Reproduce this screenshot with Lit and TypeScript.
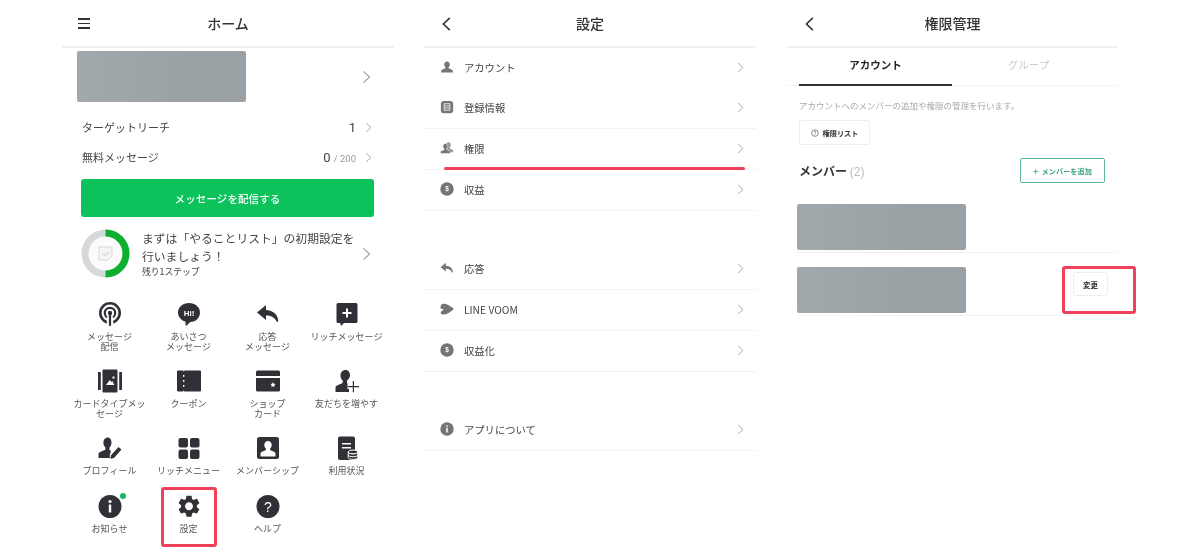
import { LitElement, html, css, svg } from "lit";
import { customElement } from "lit/decorators.js";

const D = "#2f3136";
const GEAR = "M19.14 12.94c.04-.3.06-.61.06-.94 0-.32-.02-.64-.07-.94l2.03-1.58c.18-.14.23-.41.12-.61l-1.92-3.32c-.12-.22-.37-.29-.59-.22l-2.39.96c-.5-.38-1.03-.7-1.62-.94l-.36-2.54c-.04-.24-.24-.41-.48-.41h-3.84c-.24 0-.43.17-.47.41l-.36 2.54c-.59.24-1.13.57-1.62.94l-2.39-.96c-.22-.08-.47 0-.59.22L2.74 8.87c-.12.21-.08.47.12.61l2.03 1.58c-.05.3-.09.63-.09.94s.02.64.07.94l-2.03 1.58c-.18.14-.23.41-.12.61l1.92 3.32c.12.22.37.29.59.22l2.39-.96c.5.38 1.03.7 1.62.94l.36 2.54c.05.24.24.41.48.41h3.84c.24 0 .44-.17.47-.41l.36-2.54c.59-.24 1.13-.56 1.62-.94l2.39.96c.22.08.47 0 .59-.22l1.92-3.32c.12-.22.07-.47-.12-.61l-2.01-1.58zM12 15.6c-1.98 0-3.6-1.62-3.6-3.6s1.62-3.6 3.6-3.6 3.6 1.62 3.6 3.6-1.62 3.6-3.6 3.6z";
const REPLY = "M10 3 1 10.500l9 7.500v-4.600c4.800 0 8.200 1.500 11 6.300.4.600 1.200.4 1.200-.4 0-6.600-5.200-11-12.200-11.200z";
const PERSON = "M12 2.500c-3 0-4.800 2.400-4.800 5.300 0 2 .9 3.800 2.200 4.800v1.700l-6 2.600c-1 .5-1.400 1.200-1.400 2.200v2.400h20v-2.400c0-1-.4-1.700-1.400-2.200l-6-2.600v-1.700c1.300-1 2.200-2.800 2.200-4.800 0-2.900-1.800-5.300-4.800-5.300z";

const icons: Record<string, unknown> = {
  broadcast: svg`<g fill="none" stroke="${D}"><circle cx="12" cy="11" r="9.700" stroke-width="2.600"/><circle cx="12" cy="11" r="5.200" stroke-width="2.200"/></g><rect x="8.800" y="14.500" width="6.400" height="10" fill="#fff"/><circle cx="12" cy="11" r="2.200" fill="${D}"/><rect x="10.900" y="11" width="2.200" height="13" rx="1" fill="${D}"/>`,
  hi: svg`<path fill="${D}" d="M12 1C5.900 1 1 5.200 1 10.500c0 4.200 3 7.700 7.300 9l.4 3.600c0 .6.6.8 1 .4l3.600-3.500C18.800 20 23 15.800 23 10.500 23 5.200 18.100 1 12 1z"/><text x="12" y="13.500" text-anchor="middle" font-size="8" font-weight="700" fill="#fff" font-family="Liberation Sans, sans-serif">Hi!</text>`,
  reply: svg`<path fill="${D}" d="${REPLY}"/>`,
  rich: svg`<path fill="${D}" d="M3 1h18a1.500 1.500 0 0 1 1.500 1.500v17A1.500 1.500 0 0 1 21 21H9l-3 3-.8-3H3a1.500 1.500 0 0 1-1.500-1.500v-17A1.500 1.500 0 0 1 3 1z"/><path fill="#fff" d="M11 6.500h2v3.500h3.500v2H13v3.500h-2V12H7.500v-2H11z"/>`,
  cardtype: svg`<path fill="${D}" d="M5.500 .5h13a1 1 0 0 1 1 1v21a1 1 0 0 1-1 1h-13a1 1 0 0 1-1-1v-21a1 1 0 0 1 1-1zM0 3h2.800v18H0zM21.200 3H24v18h-2.800z"/><path fill="#fff" d="M8 16l3.800-5 1.500 2 1-1 2 4zM14.500 7.500h2v2h-2z"/>`,
  coupon: svg`<path fill="${D}" d="M1 1.500h5l.7 1 .7-1H23a1 1 0 0 1 1 1v19a1 1 0 0 1-1 1H7.400l-.7-1-.7 1H1a1 1 0 0 1-1-1v-19a1 1 0 0 1 1-1z"/><g fill="#fff"><rect x="6" y="6" width="1.400" height="1.800"/><rect x="6" y="11" width="1.400" height="1.800"/><rect x="6" y="16" width="1.400" height="1.800"/></g>`,
  shop: svg`<path fill="${D}" d="M1.500 1.500h21A1.500 1.500 0 0 1 24 3v4H0V3a1.500 1.500 0 0 1 1.500-1.500zM0 9h24v12a1.500 1.500 0 0 1-1.500 1.500h-21A1.500 1.500 0 0 1 0 21z"/><path fill="#fff" d="m17 13 .8 1.700 1.900.3-1.400 1.300.3 1.900-1.600-.9-1.600.9.3-1.900-1.400-1.300 1.900-.3z"/>`,
  friend: svg`<path fill="${D}" d="M10.500 1C7.200 1 5.500 3.500 5.500 6.500c0 2.200.9 4 2.200 5.100v2.300L2 16.500c-1 .5-1.500 1.300-1.500 2.400V23H14v-3h-1.500v-5.500l-.5-.6v-2.300c1.300-1.100 3-2.900 3-5.100C15 3.500 13.800 1 10.500 1z"/><path fill="${D}" d="M18.800 13h1.200v5h5v1.200h-5v5h-1.200v-5h-5V18h5z" transform="translate(-1 -1)"/>`,
  profile: svg`<path fill="${D}" d="M10 1.500c-3 0-4.600 2.400-4.600 5.300 0 2 .8 3.600 2 4.700v2.200L2 16c-1 .5-1.500 1.200-1.500 2.300V22H12.500l-1-2 1.500-5-1.500-1v-2.500c1.200-1.100 2-2.700 2-4.700 0-2.900-1.500-5.300-3.500-5.300z"/><path fill="${D}" d="m20.500 11 3 2.500-7.500 8.500-3.500.8.500-3.500z"/>`,
  richmenu: svg`<g fill="${D}"><rect x="1.500" y="2" width="9.500" height="9.500" rx="2"/><rect x="13" y="2" width="9.500" height="9.500" rx="2"/><rect x="1.500" y="13.500" width="9.500" height="9.500" rx="2"/><rect x="13" y="13.500" width="9.500" height="9.500" rx="2"/></g>`,
  member: svg`<rect x="1" y="1" width="22" height="22" rx="2.500" fill="${D}"/><path fill="#fff" d="M12 5c-2.300 0-3.700 1.800-3.700 4 0 1.500.6 2.800 1.600 3.600v1.300l-4.400 2c-.7.400-1 .9-1 1.700V20.500h15v-2.900c0-.8-.3-1.300-1-1.700l-4.400-2v-1.300c1-.8 1.600-2.100 1.600-3.600 0-2.200-1.400-4-3.700-4z"/>`,
  usage: svg`<path fill="${D}" d="M5 .5h13a2 2 0 0 1 2 2v20a1.500 1.500 0 0 1-1.500 1.500H5a2 2 0 0 1-2-2v-20a2 2 0 0 1 2-1.500z"/><path fill="#fff" d="M7 7h9v1.600H7zM7 11h9v1.600H7z"/><ellipse cx="18" cy="16" rx="4.800" ry="2" fill="${D}" stroke="#fff"/><path fill="${D}" stroke="#fff" d="M13.200 16v5.500c0 1.100 2.200 2 4.800 2s4.800-.9 4.800-2V16c0 1.100-2.200 2-4.800 2s-4.800-.9-4.800-2z"/><path fill="none" stroke="#fff" d="M13.200 18.800c0 1.100 2.200 2 4.800 2s4.800-.9 4.800-2"/>`,
  info: svg`<circle cx="12" cy="12.500" r="11.500" fill="${D}"/><circle cx="12" cy="7.500" r="1.600" fill="#fff"/><rect x="10.800" y="10.500" width="2.400" height="8" rx=".5" fill="#fff"/>`,
  gear: svg`<path fill="${D}" d="${GEAR}" transform="translate(-1.200 -1) scale(1.100)"/>`,
  help: svg`<circle cx="12" cy="12.500" r="11.500" fill="${D}"/><text x="12" y="18" text-anchor="middle" font-size="14" font-weight="400" fill="#fff" font-family="Liberation Sans, sans-serif">?</text>`,
};

const G = "#757575";
const smallIcons: Record<string, unknown> = {
  account: svg`<path fill="${G}" d="${PERSON}"/>`,
  reg: svg`<rect x="1.500" y="1.500" width="21" height="21" rx="5" fill="${G}"/><g fill="none" stroke="#fff" stroke-width="1.300"><rect x="7" y="6.500" width="10" height="11"/><path d="M7 10.200h10M7 13.800h10"/></g>`,
  perm: svg`<path fill="${G}" opacity=".75" transform="translate(5 0) scale(.8 .9)" d="${PERSON}"/><path fill="${G}" stroke="#fff" transform="translate(-1 2) scale(.85 .9)" d="${PERSON}"/>`,
  money: svg`<circle cx="12" cy="12" r="11.500" fill="${G}"/><text x="12" y="16" text-anchor="middle" font-size="11" font-weight="700" fill="#fff" font-family="Liberation Sans, sans-serif">$</text>`,
  reply: svg`<path fill="${G}" d="${REPLY}"/>`,
  voom: svg`<path fill="${G}" d="M4 3.500C9 2 16 6 23 11c.6.5.6 1.300 0 1.800C18 17 12 21.500 5.500 21.500 2.500 21.500 .5 19 1.500 16.500l5-3.500-5.500-2C.5 8 1.500 4.200 4 3.500z"/>`,
  info: svg`<circle cx="12" cy="12" r="11.500" fill="${G}"/><circle cx="12" cy="7" r="1.500" fill="#fff"/><rect x="10.700" y="10" width="2.600" height="8" fill="#fff"/>`,
};

const chevron = (cls = "") => html`<svg class="chev ${cls}" viewBox="0 0 10 16"><path d="M1.500 1.500 8.500 8l-7 6.500" fill="none" stroke="currentColor" stroke-width="1.300"/></svg>`;

const back = html`<svg class="back" viewBox="0 0 10 16"><path d="M8.800 1 1.500 8l7.300 7" fill="none" stroke="#333" stroke-width="1.800"/></svg>`;

@customElement("app-root")
export class AppRoot extends LitElement {
  static styles = css`
    :host { display: block; width: 1200px; height: 553px; position: relative; overflow: hidden; background: #fff;
      font-family: "Noto Sans CJK JP", "Noto Sans", sans-serif; color: #3a3a3a; }
    .page { display: flex; padding-left: 62px; gap: 30px; filter: blur(0.5px); }
    .panel { width: 332px; flex: none; }
    .panel.third { margin-left: 1px; width: 331px; }
    .hdr { height: 46px; border-bottom: 2px solid #f1f1f1; display: flex; align-items: center; justify-content: center; position: relative; font-size: 14px; font-weight: 500; color: #333; padding-bottom: 0; box-sizing: content-box; }
    .hdr .left { position: absolute; left: 18px; top: 17px; display: flex; }
    .hdr .left.menu { left: 16px; top: 18px; }
    .back { width: 9px; height: 14px; }
    .burger { width: 12px; height: 11px; display: flex; flex-direction: column; justify-content: space-between; }
    .burger i { display: block; height: 1.800px; background: #333; }
    .chev { width: 7px; height: 11px; color: #a0a0a0; flex: none; }
    .chev.big { width: 9px; height: 14px; }
    .blur { background: linear-gradient(90deg, #a2a9ac, #9aa2a5 60%, #9ba1a4); border-radius: 2px; width: 169px; }
    .acct { display: flex; align-items: center; justify-content: space-between; padding: 3px 23px 0 15px; margin-bottom: 10px; }
    .acct .blur { height: 51px; }
    .stat { display: flex; align-items: center; height: 30px; padding: 0 22px 0 20px; font-size: 11px; color: #444; }
    .stat .name { flex: 1; }
    .stat .val { font-family: Roboto, sans-serif; font-size: 13px; margin-right: 9px; color: #444; }
    .stat .val small { font-size: 9.500px; color: #999; }
    .cta { margin: 7px 20px 0 19px; height: 38px; border-radius: 3px; background: #0bc25b; color: #fff; font-size: 10.500px; font-weight: 500; display: flex; align-items: center; justify-content: center; letter-spacing: 0.100px; }
    .todo { display: flex; align-items: center; margin-top: 12px; padding: 0 23px 0 19px; }
    .ring { width: 49px; height: 49px; flex: none; margin-right: 12px; }
    .todo .txt { flex: 1; font-size: 11.800px; line-height: 18px; color: #444; margin-top: -1px; }
    .todo .txt small { display: block; font-size: 8.800px; line-height: 13px; }
    .grid { display: grid; grid-template-columns: repeat(4, 79px); grid-template-rows: 67px 67px 58px 50px; padding: 24px 0 0 8px; }
    .cell { display: flex; flex-direction: column; align-items: center; font-size: 9px; line-height: 10px; text-align: center; color: #555; position: relative; }
    .cell svg { width: 24px; height: 24px; margin-bottom: 6px; flex: none; }
    .cell .lbl { width: 76px; }
    .dot { position: absolute; left: 50px; top: -1px; width: 6px; height: 6px; background: #13b866; border-radius: 50%; }
    .row { height: 41px; display: flex; align-items: center; padding: 0 12px 2px 16px; font-size: 10.300px; color: #444; box-sizing: border-box; }
    .row.line { border-bottom: 1px solid #f3f3f3; }
    .row.first { height: 40px; }
    .row svg.ic { width: 14px; height: 14px; margin-right: 10px; flex: none; }
    .row .t { flex: 1; }
    .sp { height: 38px; }
    .sp2 { height: 38px; }
    .tabs { display: flex; height: 39px; border-bottom: 1px solid #f3f3f3; margin-top: -2px; padding-left: 12px; }
    .tab { width: 153px; display: flex; align-items: center; justify-content: center; font-size: 10.500px; color: #ccc; padding-bottom: 3px; box-sizing: border-box; }
    .tab.on { color: #222; font-weight: 700; border-bottom: 2px solid #333; margin-bottom: -1px; padding-bottom: 1px; }
    .body3 { padding: 0 13px 0 12px; }
    .desc { font-size: 8.500px; color: #aaa; margin-top: 13px; line-height: 13px; }
    .btn { display: flex; align-items: center; justify-content: center; border: 1px solid #eee; border-radius: 2px; background: #fff; font-size: 7.200px; font-weight: 700; color: #333; box-sizing: border-box; }
    .perm { width: 71px; height: 25px; margin-top: 8px; gap: 4px; }
    .perm svg { width: 8px; height: 8px; }
    .mem { display: flex; align-items: center; justify-content: space-between; margin-top: 13px; }
    .mem .h { font-size: 12px; font-weight: 700; color: #333; }
    .mem .h span { font-weight: 400; color: #bbb; font-family: "Liberation Sans", sans-serif; font-size: 12px; }
    .add { width: 85px; height: 25px; border: 1px solid #59b796; color: #3aa57e; gap: 3px; }
    .add b { font-size: 10px; font-weight: 400; }
    .list { margin-top: 21px; }
    .m { display: flex; justify-content: space-between; border-bottom: 1px solid #f3f3f3; margin: 0 -13px 0 -2px; padding-right: 10px; }
    .m .blur { height: 46px; }
    .m.a { padding-bottom: 2px; }
    .m.b { margin-top: 14px; padding-bottom: 2px; }
    .chg { width: 35px; height: 24px; margin-top: 5px; font-size: 7.500px; }
    .box { position: absolute; border: 3px solid #f0405a; border-radius: 3px; box-sizing: border-box; pointer-events: none; filter: blur(0.4px); }
    .b1 { left: 161px; top: 487px; width: 56px; height: 60px; }
    .b2 { left: 1062px; top: 266px; width: 74px; height: 48px; }
    .ul { position: absolute; left: 444px; top: 166.500px; width: 301px; height: 3px; border-radius: 2px; background: #f0405a; }
  `;

  cell(ic: string, lbl: unknown, dot = false) {
    return html`<div class="cell"><svg viewBox="0 0 24 24">${icons[ic]}</svg>${dot ? html`<i class="dot"></i>` : ""}<div class="lbl">${lbl}</div></div>`;
  }
  row(ic: string, t: string, cls = "line") {
    return html`<div class="row ${cls}"><svg class="ic" viewBox="0 0 24 24">${smallIcons[ic]}</svg><span class="t">${t}</span>${chevron()}</div>`;
  }

  render() {
    return html`
      <div class="page">
        <section class="panel">
          <div class="hdr"><span class="left menu"><span class="burger"><i></i><i></i><i></i></span></span>ホーム</div>
          <div class="acct"><div class="blur"></div>${chevron("big")}</div>
          <div class="stat"><span class="name">ターゲットリーチ</span><span class="val">1</span>${chevron()}</div>
          <div class="stat"><span class="name">無料メッセージ</span><span class="val">0 <small>/ 200</small></span>${chevron()}</div>
          <div class="cta">メッセージを配信する</div>
          <div class="todo">
            <svg class="ring" viewBox="0 0 49 49">
              <circle cx="24.500" cy="24.500" r="20.500" fill="#fbfbfb" stroke="#d6d9dc" stroke-width="7"/>
              <path d="M24.500 4a20.500 20.500 0 0 1 0 41" fill="none" stroke="#0cb02e" stroke-width="7"/>
              <path d="M18 18h13v9l-4 4h-9z" fill="#f4f5f5" stroke="#d4d8da"/>
              <path d="m21.500 24.500 2.500 2 4-3.500" fill="none" stroke="#c4c8ca"/>
            </svg>
            <div class="txt">まずは「やることリスト」の初期設定を<br>行いましょう！<small>残り1ステップ</small></div>
            ${chevron("big")}
          </div>
          <div class="grid">
            ${this.cell("broadcast", html`メッセージ<br>配信`)}
            ${this.cell("hi", html`あいさつ<br>メッセージ`)}
            ${this.cell("reply", html`応答<br>メッセージ`)}
            ${this.cell("rich", "リッチメッセージ")}
            ${this.cell("cardtype", html`カードタイプメッ<br>セージ`)}
            ${this.cell("coupon", "クーポン")}
            ${this.cell("shop", html`ショップ<br>カード`)}
            ${this.cell("friend", "友だちを増やす")}
            ${this.cell("profile", "プロフィール")}
            ${this.cell("richmenu", "リッチメニュー")}
            ${this.cell("member", "メンバーシップ")}
            ${this.cell("usage", "利用状況")}
            ${this.cell("info", "お知らせ", true)}
            ${this.cell("gear", "設定")}
            ${this.cell("help", "ヘルプ")}
          </div>
        </section>

        <section class="panel">
          <div class="hdr"><span class="left">${back}</span>設定</div>
          ${this.row("account", "アカウント", "first")}
          ${this.row("reg", "登録情報")}
          ${this.row("perm", "権限")}
          ${this.row("money", "収益")}
          <div class="sp"></div>
          ${this.row("reply", "応答")}
          ${this.row("voom", "LINE VOOM")}
          ${this.row("money", "収益化")}
          <div class="sp2"></div>
          ${this.row("info", "アプリについて")}
        </section>

        <section class="panel third">
          <div class="hdr"><span class="left">${back}</span>権限管理</div>
          <div class="tabs"><div class="tab on">アカウント</div><div class="tab">グループ</div></div>
          <div class="body3">
            <div class="desc">アカウントへのメンバーの追加や権限の管理を行います。</div>
            <div class="btn perm"><svg viewBox="0 0 12 12"><circle cx="6" cy="6" r="5" fill="none" stroke="#555"/><path d="M4.500 4.500c.3-1.500 3-1.500 3 0 0 1-1.500 1-1.500 2.200M6 8.200v1" fill="none" stroke="#555"/></svg>権限リスト</div>
            <div class="mem"><div class="h">メンバー <span>(2)</span></div><div class="btn add"><b>+</b>メンバーを追加</div></div>
            <div class="list">
              <div class="m a"><div class="blur"></div></div>
              <div class="m b"><div class="blur"></div><div class="btn chg">変更</div></div>
            </div>
          </div>
        </section>
      </div>
      <div class="box b1"></div>
      <div class="box b2"></div>
      <div class="ul"></div>
    `;
  }
}
